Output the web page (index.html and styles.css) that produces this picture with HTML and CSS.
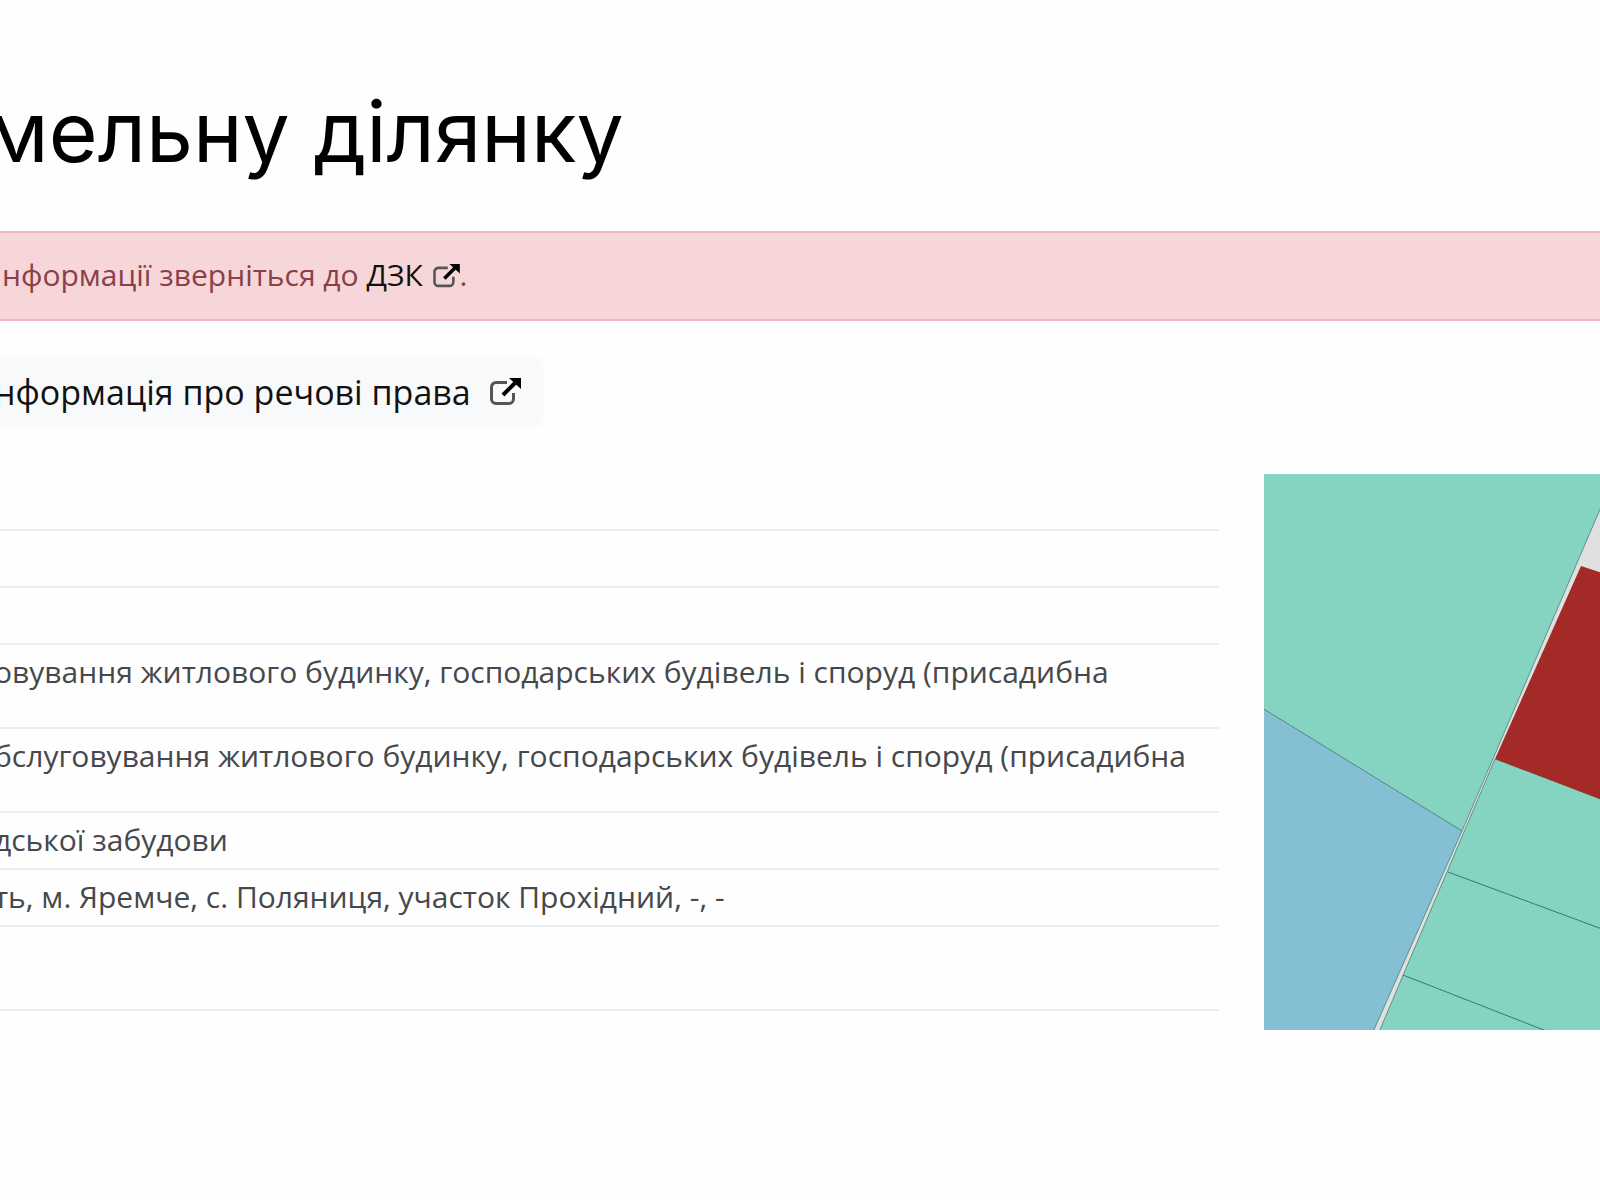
FILE: index.html
```html
<!DOCTYPE html>
<html lang="uk">
<head>
    <meta charset="UTF-8">
    <meta name="viewport" content="width=device-width, initial-scale=1.0">
    <title>Інформація про земельну ділянку</title>
    <link rel="stylesheet" href="styles.css">
</head>
<body>
    <main class="page">
        <h1 class="title">мельну ділянку</h1>

        <div class="alert">
            нформації зверніться до <a href="#dzk">ДЗК <svg class="icon" viewBox="0 0 31 28"><path d="M17 4.500H6a4.500 4.500 0 0 0-4.500 4.500v12a4.500 4.500 0 0 0 4.500 4.500h13a4.500 4.500 0 0 0 4.500-4.500v-6"/><path class="arrow" d="M13 17 25 5"/><path class="head" d="M19 0h12v11z"/></svg></a>.
        </div>

        <a class="button" href="#rights">
            нформація про речові права
            <svg class="icon" viewBox="0 0 31 28"><path d="M17 4.500H6a4.500 4.500 0 0 0-4.500 4.500v12a4.500 4.500 0 0 0 4.500 4.500h13a4.500 4.500 0 0 0 4.500-4.500v-6"/><path class="arrow" d="M13 17 25 5"/><path class="head" d="M19 0h12v11z"/></svg>
        </a>

        <div class="content">
            <table class="info">
                <tr><td></td></tr>
                <tr><td></td></tr>
                <tr><td></td></tr>
                <tr class="tall"><td>овування житлового будинку, господарських будівель і споруд (присадибна</td></tr>
                <tr class="tall"><td>бслуговування житлового будинку, господарських будівель і споруд (присадибна</td></tr>
                <tr><td>дської забудови</td></tr>
                <tr><td>ть, м. Яремче, с. Поляниця, участок Прохідний, -, -</td></tr>
                <tr class="tall"><td></td></tr>
            </table>

            <!-- Кадастрова карта -->
            <svg class="map" viewBox="0 0 336 556" preserveAspectRatio="xMinYMin slice">
                <rect width="336" height="556" fill="#e0e0e0"/>
                <polygon class="plot" points="-2,-2 352,-2 198,357 -2,234"/>
                <polygon class="plot water" points="-2,234 198,357 109,558 -2,558"/>
                <polygon class="plot" points="231,285 338,325 338,558 115,558"/>
                <path class="border" d="M184 398 338 455M139 501 285 558"/>
                <polygon class="selected" points="317,92 338,99 338,326 231,285"/>
            </svg>
        </div>
    </main>
</body>
</html>
```
FILE: styles.css
```css
* {
    box-sizing: border-box;
}

body {
    margin: 0;
    background: #fefefe;
    color: #000;
    font-family: "Open Sans", "Noto Sans", sans-serif;
    font-size: 30px;
    overflow-x: hidden;
}

.page {
    margin-left: -16px;
    padding-top: 76px;
}

.title {
    margin: 0 0 43px;
    font-family: Inter, "Open Sans", sans-serif;
    font-size: 84px;
    font-weight: 400;
    line-height: 112px;
}

.alert {
    padding: 22px 18px 24px;
    border: solid #f2b8c0;
    border-width: 2px 0;
    background: #f6d6d9;
    color: #8a3f49;
    line-height: 40px;
}

.alert a {
    color: #111;
    text-decoration: none;
}

/* Іконка зовнішнього посилання */
.icon {
    width: 27px;
    height: 24px;
    fill: none;
    stroke: #555;
    stroke-width: 3;
}

.alert .icon {
    margin-left: 2px;
    vertical-align: -2px;
}

.icon .arrow {
    stroke: #000;
    stroke-width: 4;
}

.icon .head {
    fill: #000;
    stroke: none;
}

.button {
    display: inline-flex;
    align-items: center;
    gap: 19px;
    height: 70px;
    margin: 36px 0 47px;
    padding: 0 23px 0 10px;
    border-radius: 10px;
    background: #f8f9fb;
    color: #111;
    font-size: 34px;
    text-decoration: none;
    vertical-align: top;
}

.button .icon {
    width: 31px;
    height: 28px;
}

.content {
    display: grid;
    grid-template-columns: minmax(0, 1fr) 21vw;
    gap: 45px;
    align-items: start;
}

.info {
    width: 100%;
    border-collapse: separate;
    border-spacing: 0;
    color: #46484b;
}

.info td {
    height: 57px;
    padding: 7px 0 0 10px;
    border-bottom: 2px solid #ebedf0;
    line-height: 40px;
    vertical-align: top;
    white-space: nowrap;
}

.info .tall td {
    height: 84px;
}

/* Карта */
.map {
    display: block;
    width: 100%;
    height: 556px;
}

.plot {
    fill: #84d4c1;
    stroke: #5d9189;
}

.plot.water {
    fill: #84bfd3;
}

.border {
    stroke: #3f7468;
}

.selected {
    fill: #a42a28;
}
```
